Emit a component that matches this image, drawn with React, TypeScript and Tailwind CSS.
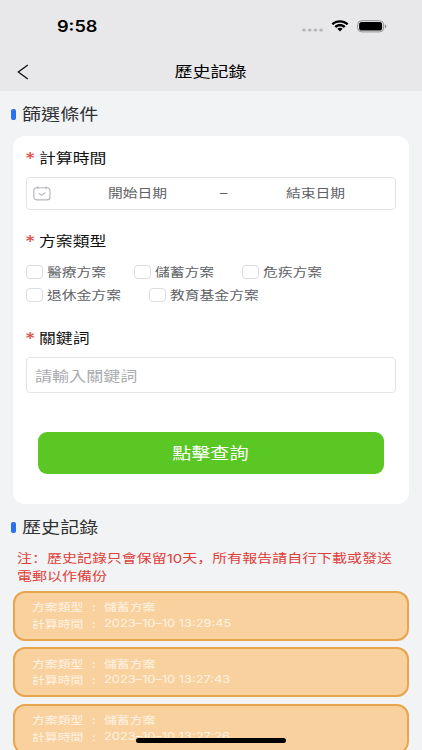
import type { ReactNode } from "react";
import clsx from "clsx";

type TextProps = {
  children: ReactNode;
  className?: string;
};

// Glyphs on this screen are wider than they are tall.
function Text({ children, className }: TextProps) {
  return (
    <span className={clsx("inline-block whitespace-pre scale-x-[1.218]", className ?? "origin-left")}>{children}</span>
  );
}

const planRows = [
  [
    { label: "醫療方案", width: "w-[107.5px]" },
    { label: "儲蓄方案", width: "w-[108px]" },
    { label: "危疾方案", width: "w-[100px]" },
  ],
  [
    { label: "退休金方案", width: "w-[123px]" },
    { label: "教育基金方案", width: "w-[130px]" },
  ],
];

const records = [
  { plan: "儲蓄方案", time: "2023–10–10 13:29:45" },
  { plan: "儲蓄方案", time: "2023–10–10 13:27:43" },
  { plan: "儲蓄方案", time: "2023–10–10 13:27:26" },
];

function StatusBar() {
  return (
    <div className="flex h-[52px] items-center pl-[57px] pr-[35px]">
      <span className="mt-px origin-left scale-x-[1.18] font-['Inter'] text-[15.4px] font-semibold leading-none text-black">
        9:58
      </span>
      <div className="ml-auto flex items-center">
        <svg width="22" height="4" viewBox="0 0 22 4" className="mt-2" fill="#b9b9bb">
          <ellipse cx="2" cy="2" rx="2" ry="1.6" />
          <ellipse cx="7.7" cy="2" rx="2" ry="1.6" />
          <ellipse cx="13.4" cy="2" rx="2" ry="1.6" />
          <ellipse cx="19.1" cy="2" rx="2" ry="1.6" />
        </svg>
        <svg
          width="18"
          height="12"
          viewBox="0 0 17 12"
          preserveAspectRatio="none"
          className="ml-[7px]"
          fill="#000"
        >
          <path d="M8.5 2.6c2.3 0 4.5.9 6.2 2.4.1.1.3.1.4 0l1.2-1.2c.1-.1.1-.3 0-.5-4.4-4.1-11.3-4.1-15.6 0-.1.1-.1.3 0 .5L1.9 5c.1.1.3.1.4 0 1.7-1.6 3.9-2.4 6.2-2.4z" />
          <path d="M8.5 6.4c1.2 0 2.4.5 3.4 1.3.1.1.3.1.4 0l1.2-1.2c.1-.1.1-.4 0-.5-2.8-2.6-7.2-2.6-10 0-.1.1-.1.4 0 .5l1.2 1.2c.1.1.3.1.4 0 .9-.8 2.1-1.3 3.4-1.3z" />
          <path d="M10.8 9.1c.1-.1.1-.4 0-.5-1.3-1.1-3.3-1.1-4.6 0-.2.1-.2.4 0 .5l2.1 2.1c.1.1.3.1.4 0z" />
        </svg>
        <svg width="30" height="13" viewBox="0 0 30 13" className="ml-[8px]">
          <rect x="0.6" y="0.7" width="26" height="11.2" rx="4" fill="none" stroke="#929294" strokeWidth="1" />
          <rect x="2.1" y="2.1" width="23" height="8.4" rx="2.6" fill="#000" />
          <path d="M27.9 4.6c1.1.4 1.5 1 1.5 1.8s-.4 1.4-1.5 1.8z" fill="#929294" />
        </svg>
      </div>
    </div>
  );
}

function SectionTitle({ children }: { children: string }) {
  return (
    <div className="flex h-6 items-center pl-[11px]">
      <div className="h-[11px] w-[4.5px] rounded-[2px] bg-[#2b70ee]" />
      <h2 className="ml-[6.5px] text-[15.7px] leading-none text-[#303133]">
        <Text>{children}</Text>
      </h2>
    </div>
  );
}

function FieldLabel({ children }: { children: string }) {
  return (
    <div className="flex h-5 items-center text-[13.85px] leading-none text-[#111]">
      <span className="-ml-px w-[14px] pt-[3px] font-['Inter'] text-[17px] text-[#dd4a45]">
        <Text>*</Text>
      </span>
      <Text>{children}</Text>
    </div>
  );
}

function CalendarIcon() {
  return (
    <svg width="18" height="15" viewBox="0 0 18 15" fill="none" stroke="#b4b6bc" strokeWidth="1.1" strokeLinecap="round">
      <rect x="0.8" y="1.7" width="16.2" height="12.2" rx="3" />
      <path d="M4.8 0.7v2M13 0.7v2M6.2 7.5l2.4 1.9 3.4-2.6" />
    </svg>
  );
}

function RecordCard({ plan, time }: { plan: string; time: string }) {
  return (
    <div className="flex h-[50px] flex-col justify-center rounded-[12px] border-2 border-[#e9a54d] bg-[#f8d19e] pl-[17px] text-[10.55px] leading-[16.6px] text-[#fff3e4]">
      <div className="flex">
        <span className="w-[60px]"><Text>方案類型</Text></span>
        <span className="w-[12px]"><Text>:</Text></span>
        <Text>{plan}</Text>
      </div>
      <div className="flex">
        <span className="w-[60px]"><Text>計算時間</Text></span>
        <span className="w-[12px]"><Text>:</Text></span>
        <span className="font-['Inter']"><Text>{time}</Text></span>
      </div>
    </div>
  );
}

export default function App() {
  return (
    <div
      lang="zh-Hant"
      className="relative h-[750px] w-[422px] overflow-hidden bg-[#f2f3f5] font-['Noto_Sans_CJK_TC',sans-serif]"
    >
      <header className="h-[91px] bg-[#e8e8ea]">
        <StatusBar />
        <div className="grid h-[39px] grid-cols-[60px_1fr_60px] items-center">
          <svg
            width="12"
            height="16"
            viewBox="0 0 12 16"
            className="ml-[17px]"
            fill="none"
            stroke="#111"
            strokeWidth="1.3"
          >
            <path d="M10.8 1L1.3 8l9.5 7" />
          </svg>
          <h1 className="text-center text-[14.8px] leading-none text-black">
            <Text className="origin-center">歷史記錄</Text>
          </h1>
        </div>
      </header>

      <main>
        <div className="pt-[11px]">
          <SectionTitle>篩選條件</SectionTitle>
        </div>

        <section className="mx-[13px] mt-[10px] h-[368px] rounded-[12px] bg-white px-[13px] pt-[12px]">
          <FieldLabel>計算時間</FieldLabel>
          <div className="mt-[9px] flex h-[33px] items-center rounded-[4px] border border-[#e2e3e6] pl-[6px] text-[12.15px] leading-none text-[#606266]">
            <CalendarIcon />
            <span className="ml-[57px] w-[112px]"><Text>開始日期</Text></span>
            <span className="w-[66px] font-['Inter']"><Text>–</Text></span>
            <Text>結束日期</Text>
          </div>

          <div className="mt-[21px]">
            <FieldLabel>方案類型</FieldLabel>
          </div>
          <div className="mt-[9.6px]">
            {planRows.map((row, i) => (
              <div key={i} className="flex h-[22.7px] items-center">
                {row.map((plan) => (
                  <label key={plan.label} className={clsx("flex items-center", plan.width)}>
                    <span className="h-[14px] w-[17px] rounded-[4px] border border-[#dcdde3] bg-white" />
                    <span className="ml-[4px] text-[12.15px] leading-none text-[#606266]">
                      <Text>{plan.label}</Text>
                    </span>
                  </label>
                ))}
              </div>
            ))}
          </div>

          <div className="mt-[22px]">
            <FieldLabel>關鍵詞</FieldLabel>
          </div>
          <div className="mt-[9px] flex h-[36px] items-center rounded-[4px] border border-[#e2e3e6] pl-[8px] text-[14px] leading-none text-[#a9abb0]">
            <Text>請輸入關鍵詞</Text>
          </div>

          <button className="mx-[12px] mt-[39px] block h-[42px] w-[346px] rounded-[9px] bg-[#5ac725] pr-[2px] text-[15.7px] leading-none text-white">
            <Text className="origin-center">點擊查詢</Text>
          </button>
        </section>

        <div className="mt-[11px]">
          <SectionTitle>歷史記錄</SectionTitle>
        </div>
        <p
          lang="zh-Hans"
          className="mt-[11px] pl-[17px] font-['Inter','Noto_Sans_CJK_SC',sans-serif] text-[12.3px] leading-[17.6px] text-[#dd4039]"
        >
          <Text>{"注：歷史記錄只會保留10天，所有報告請自行下載或發送\n電郵以作備份"}</Text>
        </p>

        <div className="mx-[13px] mt-[5.6px] flex flex-col gap-[6.6px]">
          {records.map((record) => (
            <RecordCard key={record.time} plan={record.plan} time={record.time} />
          ))}
        </div>
      </main>

      <div className="absolute left-[136px] top-[738px] h-[4.5px] w-[150px] rounded-full bg-black" />
    </div>
  );
}
